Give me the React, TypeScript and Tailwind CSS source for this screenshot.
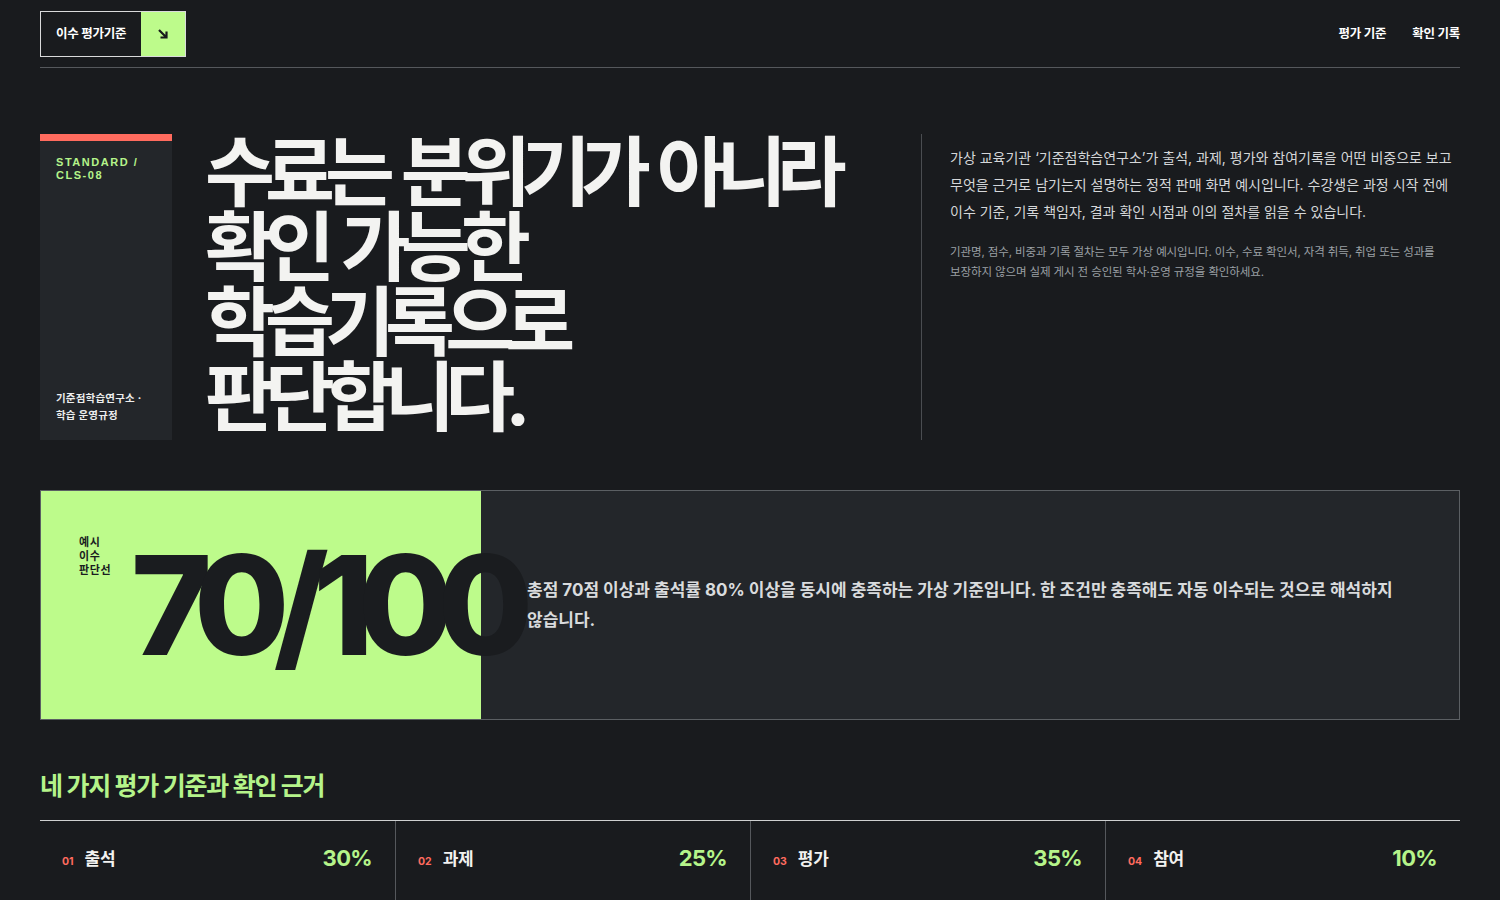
import React from 'react';

const KR = "font-['Inter','Noto_Sans_CJK_KR',sans-serif]";

interface Criterion {
  no: string;
  label: string;
  weight: string;
}

const CRITERIA: Criterion[] = [
  { no: '01', label: '출석', weight: '30%' },
  { no: '02', label: '과제', weight: '25%' },
  { no: '03', label: '평가', weight: '35%' },
  { no: '04', label: '참여', weight: '10%' },
];

const Header: React.FC = () => (
  <header className="flex items-center justify-between pt-[11px] pb-[10px] border-b border-[#55585c]">
    <a className="flex h-[46px] border border-[#d9dadb] items-stretch">
      <span className="flex items-center px-[15px] text-[12.5px] font-bold text-white tracking-[-0.02em]">이수 평가기준</span>
      <span className="flex w-[44px] items-center justify-center bg-[#bdfb8b]">
        <svg width="14" height="14" viewBox="0 0 14 14" fill="none">
          <path d="M3 3L10.5 10.5M10.5 4.5V10.5H4.5" stroke="#17191b" strokeWidth="2.2" />
        </svg>
      </span>
    </a>
    <nav className="flex gap-[26px] text-[12.5px] font-bold text-white tracking-[-0.02em]">
      <a>평가 기준</a>
      <a>확인 기록</a>
    </nav>
  </header>
);

const Hero: React.FC = () => (
  <section className="flex mt-[66px] h-[306px]">
    <div className="flex w-[132px] shrink-0 flex-col justify-between border-t-[7px] border-[#ff6b5e] bg-[#23262a] px-[16px] pt-[15px] pb-[16px]">
      <p className="font-['Liberation_Sans',sans-serif] text-[11px] font-bold leading-[13px] tracking-[0.14em] text-[#b5f48a]">
        STANDARD /<br />CLS-08
      </p>
      <p className="text-[10.5px] font-bold leading-[17px] text-[#eceded] tracking-[0.02em]">
        기준점학습연구소 ·<br />학습 운영규정
      </p>
    </div>
    <h1 className="ml-[33px] w-[716px] shrink-0 pt-[1px] text-[76px] font-bold leading-[75px] tracking-[-0.13em] [word-spacing:0.1em] text-[#f3f3f1]">
      수료는 분위기가 아니라<br />확인 가능한<br />학습기록으로<br />판단합니다.
    </h1>
    <div className="flex-1 border-l border-[#4a4d51] pl-[28px] pt-[10px] break-keep">
      <p className="text-[14px] leading-[27px] text-[#d5d7d9]">
        가상 교육기관 ‘기준점학습연구소’가 출석, 과제, 평가와 참여기록을 어떤 비중으로 보고 무엇을 근거로 남기는지 설명하는 정적 판매 화면 예시입니다. 수강생은 과정 시작 전에 이수 기준, 기록 책임자, 결과 확인 시점과 이의 절차를 읽을 수 있습니다.
      </p>
      <p className="mt-[17px] text-[11.5px] leading-[20px] text-[#9ba0a5] tracking-[-0.01em]">
        기관명, 점수, 비중과 기록 절차는 모두 가상 예시입니다. 이수, 수료 확인서, 자격 취득, 취업 또는 성과를 보장하지 않으며 실제 게시 전 승인된 학사·운영 규정을 확인하세요.
      </p>
    </div>
  </section>
);

const Score: React.FC = () => (
  <section className="mt-[50px] flex h-[230px] border border-[#5b5f63]">
    <div className="relative flex w-[440px] shrink-0 bg-[#bdfb8b] pl-[38px] pt-[44px]">
      <p className="text-[11px] font-bold leading-[14px] tracking-[0.06em] text-[#1a1c1f]">
        예시<br />이수<br />판단선
      </p>
      <span className="absolute left-[90px] top-[44px] whitespace-nowrap font-['Inter',sans-serif] text-[138px] font-extrabold leading-[140px] tracking-[-0.115em] text-[#1a1c1f]">
        70/100
      </span>
    </div>
    <div className="flex flex-1 items-center bg-[#23262a] pl-[46px] pr-[60px] break-keep">
      <p className="text-[17px] font-bold leading-[30px] text-[#d9dbdd] tracking-[0em]">
        총점 70점 이상과 출석률 80% 이상을 동시에 충족하는 가상 기준입니다. 한 조건만 충족해도 자동 이수되는 것으로 해석하지 않습니다.
      </p>
    </div>
  </section>
);

const Criteria: React.FC = () => (
  <section className="mt-[49px]">
    <h2 className="text-[25px] font-bold leading-[34px] tracking-[-0.05em] text-[#b5f48a]">네 가지 평가 기준과 확인 근거</h2>
    <div className="mt-[17px] grid grid-cols-4 border-t border-[#cfd0d1]">
      {CRITERIA.map((c, i) => (
        <div
          key={c.no}
          className={`flex h-[120px] items-start justify-between pl-[22px] pr-[23px] pt-[24px] ${i > 0 ? 'border-l border-[#55585c]' : ''}`}
        >
          <div className="flex items-baseline gap-[11px] pt-[2px]">
            <span className="font-['Inter',sans-serif] text-[10.5px] font-bold text-[#ff6b5e]">{c.no}</span>
            <span className="text-[17px] font-bold text-[#f2f2f0] tracking-[-0.02em]">{c.label}</span>
          </div>
          <span className="font-['Inter',sans-serif] text-[22px] font-bold leading-[26px] tracking-[-0.03em] text-[#b5f48a]">{c.weight}</span>
        </div>
      ))}
    </div>
  </section>
);

export default function App() {
  return (
    <div className={`min-h-screen bg-[#191b1e] ${KR}`}>
      <div className="mx-[40px]">
        <Header />
        <Hero />
        <Score />
        <Criteria />
      </div>
    </div>
  );
}
